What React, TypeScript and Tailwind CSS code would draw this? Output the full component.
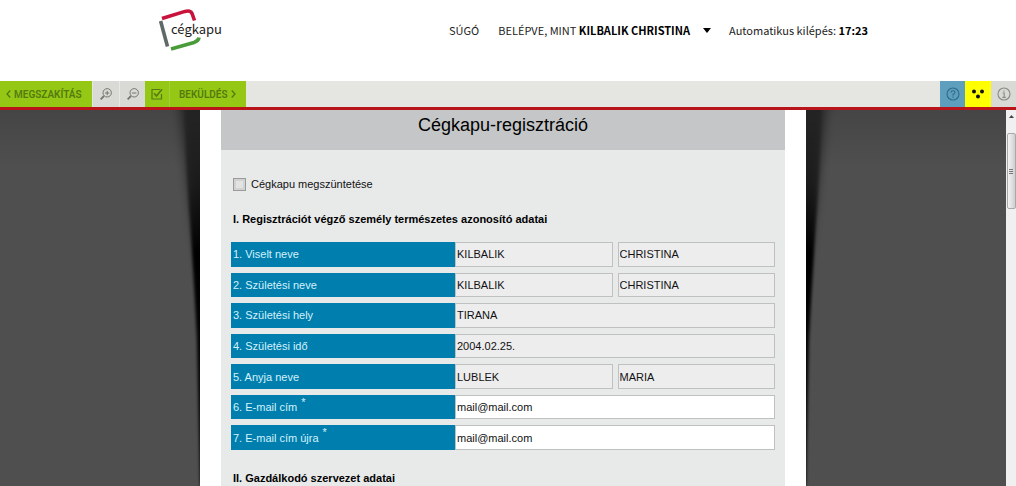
import React from 'react';

type Row = {
  id: string;
  label: string;
  values: string[];
  required?: boolean;
};

const rows: Row[] = [
  { id: 'name', label: '1. Viselt neve', values: ['KILBALIK', 'CHRISTINA'] },
  { id: 'birth-name', label: '2. Születési neve', values: ['KILBALIK', 'CHRISTINA'] },
  { id: 'birth-place', label: '3. Születési hely', values: ['TIRANA'] },
  { id: 'birth-date', label: '4. Születési idő', values: ['2004.02.25.'] },
  { id: 'mother', label: '5. Anyja neve', values: ['LUBLEK', 'MARIA'] },
  { id: 'email', label: '6. E-mail cím', values: ['mail@mail.com'], required: true },
  { id: 'email-again', label: '7. E-mail cím újra', values: ['mail@mail.com'], required: true },
];

const Logo: React.FC = () => (
  <a href="#" className="relative block h-[44px] w-[64px] shrink-0 text-[#1d1d1b]">
    <svg viewBox="0 0 64 44" className="h-full w-full" fill="none" strokeLinecap="butt" strokeWidth="3.6">
      <path d="M4 10.5 L27 3.4 Q32.500 2 34 5.500 L36.500 12.500" stroke="#c8143c" />
      <path d="M2.600 13 L9.500 38.500" stroke="#5f6a68" />
      <path d="M13 41 L36 34.500 Q40.500 33 41 29.500" stroke="#4a9c3b" />
    </svg>
    <span className="absolute top-[12px] left-[13px] font-['Noto_Sans_CJK_SC','Noto_Sans',sans-serif] text-[13px] leading-[18px]">
      cégkapu
    </span>
  </a>
);

const Header: React.FC = () => (
  <header className="flex h-[81px] items-start bg-white pl-[158px] font-['Noto_Sans_CJK_SC','Noto_Sans',sans-serif] text-[11px] leading-5 text-[#222]">
    <div className="pt-[8px]">
      <Logo />
    </div>
    <nav className="ml-[227px] flex items-center pt-[20px] whitespace-nowrap">
      <a href="#">SÚGÓ</a>
      <button type="button" className="ml-[19px] flex items-center">
        <span>
          BELÉPVE, MINT <b className="text-black">KILBALIK CHRISTINA</b>
        </span>
        <svg viewBox="0 0 8 5" className="ml-[13px] h-[5px] w-[8px]" fill="#000">
          <path d="M0 0h8L4 5z" />
        </svg>
      </button>
      <span className="ml-[18px]">
        Automatikus kilépés: <b className="text-black">17:23</b>
      </span>
    </nav>
  </header>
);

const Magnifier: React.FC<{ plus?: boolean }> = ({ plus }) => (
  <svg viewBox="0 0 12 12" className="h-[12px] w-[12px] shrink-0" fill="none" stroke="#77776f" strokeWidth="1">
    <circle cx="7.200" cy="4.800" r="4.200" />
    <path d="M4 8 L0.600 11.400" strokeWidth="1.8" />
    <path d={plus ? 'M5 5h4.400M7.200 2.800v4.400' : 'M5 5h4.400'} />
  </svg>
);

const Toolbar: React.FC = () => (
  <div className="flex h-[29px] items-stretch border-b-[3px] border-[#b8141a] bg-[#e5e5e2] font-['Roboto',sans-serif] text-[10px] font-semibold text-[#547a10]">
    <button type="button" className="flex w-[92px] items-center gap-[3px] bg-[#95c814] pl-[6px]">
      <svg viewBox="0 0 5 8" className="h-[8px] w-[5px] shrink-0" fill="none" stroke="currentColor" strokeWidth="1.3">
        <path d="M4.3 0.5 L1 4 L4.3 7.5" />
      </svg>
      MEGSZAKÍTÁS
    </button>
    <button type="button" aria-label="Nagyítás" className="ml-px flex w-[27px] items-center justify-center border-r border-[#e8e8e8] bg-[#d9d9d6]">
      <Magnifier plus />
    </button>
    <button type="button" aria-label="Kicsinyítés" className="flex w-[25px] items-center justify-center bg-[#d9d9d6]">
      <Magnifier />
    </button>
    <button type="button" aria-label="Ellenőrzés" className="flex w-[25px] items-center justify-center border-r border-[#a3d03a] bg-[#95c814]">
      <svg viewBox="0 0 12 12" className="h-[12px] w-[12px] shrink-0" fill="none" stroke="currentColor" strokeWidth="1.2">
        <path d="M9 1.5H1v9.5h9.5V6" />
        <path d="M3 5.2 L5.5 8 L11 1.2" strokeWidth="1.6" />
      </svg>
    </button>
    <button type="button" className="flex w-[76px] items-center gap-[3px] bg-[#95c814] pl-[9px]">
      BEKÜLDÉS
      <svg viewBox="0 0 5 8" className="h-[8px] w-[5px] shrink-0" fill="none" stroke="currentColor" strokeWidth="1.3">
        <path d="M0.7 0.5 L4 4 L0.7 7.5" />
      </svg>
    </button>
    <button type="button" aria-label="Súgó" className="ml-auto flex w-[25px] items-center justify-center bg-[#5d9fbd]">
      <svg viewBox="0 0 14 14" className="h-[14px] w-[14px]" fill="none" stroke="#2f6c8c" strokeWidth="1.1">
        <circle cx="7" cy="7" r="6" />
        <path d="M5 5.6 Q5 3.8 7 3.8 Q9 3.8 9 5.5 Q9 6.5 7 7.4 V8.6 M7 9.6 V10.8" />
      </svg>
    </button>
    <button type="button" aria-label="Akadálymentes nézet" className="flex w-[26px] items-center justify-center bg-[#ffff00]">
      <svg viewBox="0 0 12 10" className="h-[10px] w-[12px]" fill="#111">
        <circle cx="2" cy="2.500" r="2" />
        <circle cx="10" cy="2.500" r="2" />
        <circle cx="6" cy="7.500" r="2" />
      </svg>
    </button>
    <button type="button" aria-label="Információ" className="flex w-[25px] items-center justify-center bg-[#d9d9d6]">
      <svg viewBox="0 0 14 14" className="h-[14px] w-[14px]" fill="none" stroke="#8a8a84" strokeWidth="1.1">
        <circle cx="7" cy="7" r="6" />
        <path d="M7 3.4v1.4M5.6 6H7.2v4.4M5.4 10.4h3.4" />
      </svg>
    </button>
  </div>
);

const FieldRow: React.FC<{ row: Row }> = ({ row }) => (
  <div className="flex">
    <label htmlFor={`${row.id}-0`} className="flex w-[224px] shrink-0 items-center bg-[#007fae] pl-[2px] text-[#d5f1fb]">
      {row.label}
      {row.required && <sup className="ml-1 text-[11px]">*</sup>}
    </label>
    <div className="flex min-w-0 flex-1 gap-[5px]">
      {row.values.map((value, i) => (
        <input
          key={i}
          id={`${row.id}-${i}`}
          aria-label={row.label}
          defaultValue={value}
          readOnly={!row.required}
          className={`w-full min-w-0 flex-1 border border-[#bfc1c1] px-px text-[#111] ${row.required ? 'bg-white' : 'bg-[#ededed]'}`}
        />
      ))}
    </div>
  </div>
);

const SideShadow: React.FC<{ id: string; className: string }> = ({ id, className }) => (
  <svg viewBox="0 0 50 376" preserveAspectRatio="none" className={className}>
    <defs>
      <linearGradient id={`${id}-shade`} gradientUnits="userSpaceOnUse" x1="0" y1="0" x2="0" y2="376">
        <stop offset="0" stopColor="#000" stopOpacity="0.15" />
        <stop offset="0.2" stopColor="#000" stopOpacity="0.45" />
        <stop offset="0.38" stopColor="#000" stopOpacity="1" />
        <stop offset="1" stopColor="#000" stopOpacity="0.9" />
      </linearGradient>
      <filter id={`${id}-wide`} x="-50%" y="-10%" width="200%" height="120%">
        <feGaussianBlur stdDeviation="5 8" />
      </filter>
      <filter id={`${id}-thin`} x="-50%" y="-10%" width="200%" height="120%">
        <feGaussianBlur stdDeviation="1.5 3" />
      </filter>
    </defs>
    <path d="M70 -40 H26 Q34 60 44 130 L54 190 H70 Z" fill="#000" fillOpacity="0.4" filter={`url(#${id}-wide)`} />
    <path d="M60 -20 H33 Q36 60 40 110 Q44 170 47 230 L50 376 H60 Z" fill={`url(#${id}-shade)`} filter={`url(#${id}-thin)`} />
  </svg>
);

const Scrollbar: React.FC = () => (
  <div className="flex w-[10px] shrink-0 flex-col items-center bg-[#f0f0f0]">
    <svg viewBox="0 0 5 3" className="mt-[5px] h-[3px] w-[5px]" fill="#444">
      <path d="M0 3h5L2.500 0z" />
    </svg>
    <div className="mt-[15px] flex h-[76px] w-[9px] flex-col items-center justify-center gap-px rounded-[2px] border border-[#a8a8a8] bg-linear-to-r from-[#f3f3f3] to-[#cfcfcf]">
      <span className="h-px w-[4px] bg-[#777]" />
      <span className="h-px w-[4px] bg-[#777]" />
      <span className="h-px w-[4px] bg-[#777]" />
    </div>
  </div>
);

const Form: React.FC = () => (
  <form className="flex-1 bg-[#e8eaea] pb-[2px] text-[11px] leading-[14px] text-[#111]">
    <h1 className="h-[40px] bg-[#c5c6c7] pt-[4px] text-center text-[18px] leading-[22px] text-black">Cégkapu-regisztráció</h1>
    <div className="pr-[10px] pl-[10px]">
      <label className="mt-[27px] flex items-center gap-[5px] pl-[2px]">
        <input type="checkbox" className="h-[13px] w-[13px] appearance-none border border-[#9a9a9a] bg-[#e3e3e3] shadow-[inset_0_0_0_2px_#d2d2d2]" />
        Cégkapu megszüntetése
      </label>
      <h2 className="mt-[21px] pl-[2px] font-bold text-black">I. Regisztrációt végző személy természetes azonosító adatai</h2>
      <div className="mt-[16px] grid min-h-[208px] auto-rows-fr gap-[6px]">
        {rows.map((row) => (
          <FieldRow key={row.id} row={row} />
        ))}
      </div>
      <h2 className="mt-[21px] pl-[2px] font-bold text-black">II. Gazdálkodó szervezet adatai</h2>
    </div>
  </form>
);

export default function App() {
  return (
    <div className="flex h-screen flex-col overflow-hidden">
      <Header />
      <Toolbar />
      <main className="flex min-h-0 flex-1 font-['Liberation_Sans',Arial,sans-serif]">
        <div className="flex min-w-0 flex-1 justify-center overflow-hidden bg-linear-to-b from-[#454545] to-[#4f4f4f] to-15%">
          <div className="relative flex w-[606px] bg-white pr-[21px] pl-[21px]">
            <SideShadow id="left" className="absolute top-0 right-full h-full w-[50px]" />
            <SideShadow id="right" className="absolute top-0 left-full h-full w-[50px] -scale-x-100" />
            <Form />
          </div>
        </div>
        <Scrollbar />
      </main>
    </div>
  );
}
